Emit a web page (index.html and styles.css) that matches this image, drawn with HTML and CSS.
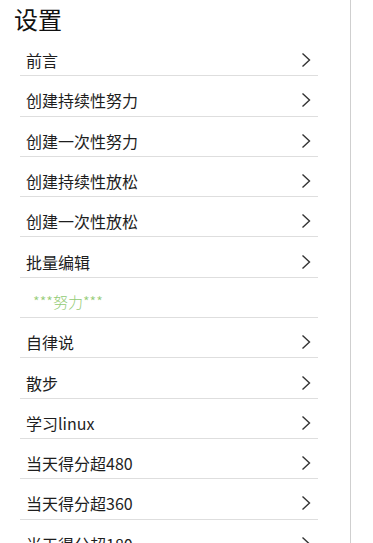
FILE: index.html
```html
<!DOCTYPE html>
<html lang="zh-CN">
<head>
    <meta charset="UTF-8">
    <meta name="viewport" content="width=device-width, initial-scale=1.0">
    <title>设置</title>
    <link rel="stylesheet" href="styles.css">
</head>
<body>
    <div class="panel">
        <h1 class="title">设置</h1>
        <ul class="menu">
            <li class="menu-item"><span>前言</span><svg class="chevron" viewBox="0 0 10 16"><path d="M1.5 1.5 L8.5 8 L1.5 14.5"/></svg></li>
            <li class="menu-item"><span>创建持续性努力</span><svg class="chevron" viewBox="0 0 10 16"><path d="M1.5 1.5 L8.5 8 L1.5 14.5"/></svg></li>
            <li class="menu-item"><span>创建一次性努力</span><svg class="chevron" viewBox="0 0 10 16"><path d="M1.5 1.5 L8.5 8 L1.5 14.5"/></svg></li>
            <li class="menu-item"><span>创建持续性放松</span><svg class="chevron" viewBox="0 0 10 16"><path d="M1.5 1.5 L8.5 8 L1.5 14.5"/></svg></li>
            <li class="menu-item"><span>创建一次性放松</span><svg class="chevron" viewBox="0 0 10 16"><path d="M1.5 1.5 L8.5 8 L1.5 14.5"/></svg></li>
            <li class="menu-item"><span>批量编辑</span><svg class="chevron" viewBox="0 0 10 16"><path d="M1.5 1.5 L8.5 8 L1.5 14.5"/></svg></li>
            <li class="menu-item section"><span>***努力***</span></li>
            <li class="menu-item"><span>自律说</span><svg class="chevron" viewBox="0 0 10 16"><path d="M1.5 1.5 L8.5 8 L1.5 14.5"/></svg></li>
            <li class="menu-item"><span>散步</span><svg class="chevron" viewBox="0 0 10 16"><path d="M1.5 1.5 L8.5 8 L1.5 14.5"/></svg></li>
            <li class="menu-item"><span>学习linux</span><svg class="chevron" viewBox="0 0 10 16"><path d="M1.5 1.5 L8.5 8 L1.5 14.5"/></svg></li>
            <li class="menu-item"><span>当天得分超480</span><svg class="chevron" viewBox="0 0 10 16"><path d="M1.5 1.5 L8.5 8 L1.5 14.5"/></svg></li>
            <li class="menu-item"><span>当天得分超360</span><svg class="chevron" viewBox="0 0 10 16"><path d="M1.5 1.5 L8.5 8 L1.5 14.5"/></svg></li>
            <li class="menu-item"><span>当天得分超180</span><svg class="chevron" viewBox="0 0 10 16"><path d="M1.5 1.5 L8.5 8 L1.5 14.5"/></svg></li>
        </ul>
    </div>
</body>
</html>
```

FILE: styles.css
```css
html, body {
    margin: 0;
    padding: 0;
    background-color: white;
    height: 100%;
    overflow: hidden;
}
body {
    font-family: "Noto Sans CJK SC", "Noto Sans", sans-serif;
    color: #222;
}
.panel {
    width: 350px;
    min-height: 100%;
    border-right: 1px solid #cfcfcf;
}
.title {
    margin: 0;
    padding-left: 14px;
    height: 36px;
    line-height: 38px;
    font-size: 24px;
    font-weight: 400;
    color: #111;
}
.menu {
    list-style: none;
    margin: 0 32px 0 20px;
    padding: 0;
}
.menu-item {
    display: flex;
    align-items: center;
    justify-content: space-between;
    box-sizing: border-box;
    height: 40.3px;
    padding: 9px 7px 0 6px;
    border-bottom: 1px solid #dedede;
    font-size: 16px;
    color: #1e1e1e;
}
.section span {
    padding-left: 7px;
    font-size: 15px;
    color: #93cb74;
    font-weight: 300;
}
.chevron {
    width: 10px;
    height: 16px;
    fill: none;
    stroke: #333;
    stroke-width: 1.4;
}
```
